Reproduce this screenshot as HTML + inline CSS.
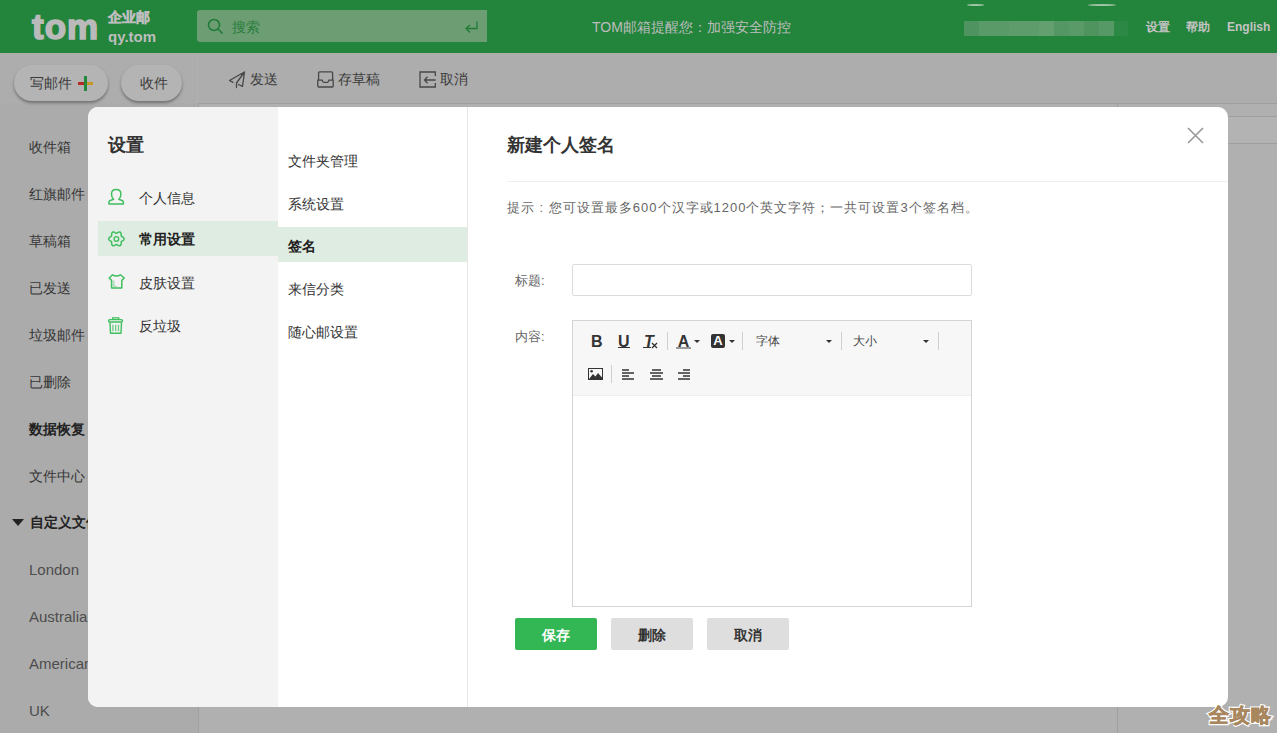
<!DOCTYPE html>
<html><head><meta charset="utf-8">
<style>
*{margin:0;padding:0;box-sizing:border-box}
html,body{width:1277px;height:733px;overflow:hidden;background:#b0b0b0;font-family:"Liberation Sans",sans-serif;position:relative}
.a{position:absolute;white-space:nowrap}
#hdr{left:0;top:0;width:1277px;height:53px;background:#23843c}
#side{left:0;top:103px;width:198px;height:630px;background:#ababab}
.vl{position:absolute;width:1px;background:#a0a0a0}
.hl{position:absolute;height:1px;background:#9f9f9f}
.si{font-size:14px;color:#353535;left:29px;line-height:20px}
.tb{font-size:14px;color:#3a3a3a;line-height:20px}
.pill{height:36px;border-radius:18px;background:#b4b4b4;box-shadow:0 2px 3px rgba(0,0,0,.35)}
#modal{left:88px;top:107px;width:1140px;height:600px;background:#fff;border-radius:10px;overflow:hidden}
#nav1{left:0;top:0;width:190px;height:600px;background:#f3f3f3}
#nav2{left:190px;top:0;width:190px;height:600px;background:#fff;border-right:1px solid #e6e6e6}
.n1{font-size:14px;color:#333;line-height:20px}
.ic{position:absolute}
</style></head><body>
<!-- header -->
<div class="a" id="hdr"></div>
<div class="a" style="left:32px;top:5px;font-size:35px;font-weight:bold;color:#bababa;line-height:44px;letter-spacing:1px;-webkit-text-stroke:1.6px #bababa">tom</div>
<div class="a" style="left:108px;top:8px;font-size:14px;font-weight:bold;color:#bdbdbd;line-height:18px;-webkit-text-stroke:0.5px #bdbdbd">企业邮</div>
<div class="a" style="left:108px;top:28px;font-size:15px;font-weight:bold;color:#bdbdbd;line-height:18px">qy.tom</div>
<div class="a" style="left:197px;top:10px;width:290px;height:32px;background:#6c9d73;border-radius:3px 0 0 3px"></div>
<svg class="a" style="left:207px;top:18px" width="17" height="17" viewBox="0 0 17 17"><circle cx="7" cy="7" r="5.5" fill="none" stroke="#1f7b37" stroke-width="1.5"/><line x1="11" y1="11" x2="15.5" y2="15.5" stroke="#1f7b37" stroke-width="1.6"/></svg>
<div class="a" style="left:232px;top:17px;font-size:14px;color:#2a7d3d;line-height:20px">搜索</div>
<svg class="a" style="left:464px;top:20px" width="15" height="14" viewBox="0 0 15 14"><path d="M13 1.5V8.5H2.5M6 5 2 8.5 6 12.5" fill="none" stroke="#1f7b37" stroke-width="1.3"/></svg>
<div class="a" style="left:592px;top:17px;font-size:14px;color:#bdbdbd;line-height:20px">TOM邮箱提醒您：加强安全防控</div>
<div class="a" style="left:964px;top:21px;width:15px;height:15px;background:#4f9460"></div><div class="a" style="left:979px;top:21px;width:15px;height:15px;background:#5a9a68"></div><div class="a" style="left:994px;top:21px;width:15px;height:15px;background:#5a9a68"></div><div class="a" style="left:1009px;top:21px;width:15px;height:15px;background:#5e9c6b"></div><div class="a" style="left:1024px;top:21px;width:15px;height:15px;background:#5e9c6b"></div><div class="a" style="left:1039px;top:21px;width:15px;height:15px;background:#649f70"></div><div class="a" style="left:1054px;top:21px;width:15px;height:15px;background:#549664"></div><div class="a" style="left:1069px;top:21px;width:15px;height:15px;background:#5a9a68"></div><div class="a" style="left:1084px;top:21px;width:15px;height:15px;background:#4f945f"></div><div class="a" style="left:1099px;top:21px;width:15px;height:15px;background:#569866"></div><div class="a" style="left:1114px;top:21px;width:14px;height:15px;background:#2b8845"></div><div class="a" style="left:967px;top:4px;width:17px;height:2px;border-radius:50%;background:#9fc4a6"></div><div class="a" style="left:1088px;top:4px;width:28px;height:2px;border-radius:50%;background:#9fc4a6"></div>
<div class="a" style="left:1146px;top:17px;font-size:12px;font-weight:bold;color:#c3c3c3;line-height:20px">设置</div>
<div class="a" style="left:1186px;top:17px;font-size:12px;font-weight:bold;color:#c3c3c3;line-height:20px">帮助</div>
<div class="a" style="left:1227px;top:17px;font-size:12px;font-weight:bold;color:#c3c3c3;line-height:20px">English</div>

<!-- background app -->
<div class="a" style="left:0;top:53px;width:1277px;height:50px;background:#adadad"></div>
<div class="a" id="side"></div>
<div class="a" style="left:197px;top:53px;width:1px;height:50px;background:#b0b0b0"></div>
<div class="vl" style="left:198px;top:103px;height:630px"></div>
<div class="hl" style="left:198px;top:103px;width:1079px"></div>
<div class="vl" style="left:1117px;top:103px;height:630px"></div>
<div class="hl" style="left:1117px;top:116px;width:160px"></div>
<div class="a" style="left:1118px;top:117px;width:159px;height:26px;background:#b3b3b3"></div>
<div class="hl" style="left:1117px;top:143px;width:160px"></div>

<div class="a pill" style="left:14px;top:65px;width:94px"></div>
<div class="a tb" style="left:30px;top:73px">写邮件</div>
<div class="a" style="left:78px;top:82px;width:6px;height:3px;background:#b52a22"></div>
<div class="a" style="left:87px;top:82px;width:6px;height:3px;background:#c79a26"></div>
<div class="a" style="left:84px;top:76px;width:3px;height:15px;background:#238a3c"></div>
<div class="a pill" style="left:121px;top:65px;width:61px"></div>
<div class="a tb" style="left:140px;top:73px">收件</div>

<svg class="a" style="left:224px;top:66px" width="28" height="26" viewBox="224 66 28 26"><path d="M244.5 72 229.5 80.5 233 82.3M244.5 72 236.5 83V87.5M244.5 72 242.5 86.3 238.5 84.5" fill="none" stroke="#474747" stroke-width="1.3" stroke-linejoin="round" stroke-linecap="round"/></svg>
<div class="a tb" style="left:250px;top:69px">发送</div>
<svg class="a" style="left:312px;top:66px" width="28" height="26" viewBox="312 66 28 26"><path d="M318.6 79.6V72.8Q318.6 71.8 319.6 71.8H331.6Q332.6 71.8 332.6 72.8V79.6M317.8 80.2H322.2Q322.6 82.3 324 82.3H327.2Q328.6 82.3 329 80.2H333.2V86Q333.2 87 332.2 87H318.8Q317.8 87 317.8 86Z" fill="none" stroke="#474747" stroke-width="1.3"/></svg>
<div class="a tb" style="left:338px;top:69px">存草稿</div>
<svg class="a" style="left:414px;top:66px" width="28" height="26" viewBox="414 66 28 26"><path d="M435.3 76V72H420V87H435.3V83M435.6 80H424.8M427.5 76.8 424.5 80 427.5 83.2" fill="none" stroke="#474747" stroke-width="1.3"/></svg>
<div class="a tb" style="left:440px;top:69px">取消</div>

<div class="a si" style="top:137px">收件箱</div>
<div class="a si" style="top:184px">红旗邮件</div>
<div class="a si" style="top:231px">草稿箱</div>
<div class="a si" style="top:278px">已发送</div>
<div class="a si" style="top:325px">垃圾邮件</div>
<div class="a si" style="top:372px">已删除</div>
<div class="a si" style="top:419px;font-weight:bold;color:#222">数据恢复</div>
<div class="a si" style="top:466px">文件中心</div>
<svg class="a" style="left:12px;top:519px" width="12" height="7" viewBox="0 0 12 7"><path d="M0 0H12L6 7Z" fill="#222"/></svg>
<div class="a si" style="top:512px;left:30px;font-weight:bold;color:#222">自定义文件夹</div>
<div class="a si" style="top:560px;font-size:15px;color:#4d4d4d">London</div>
<div class="a si" style="top:607px;font-size:15px;color:#4d4d4d">Australia</div>
<div class="a si" style="top:654px;font-size:15px;color:#4d4d4d">American</div>
<div class="a si" style="top:701px;font-size:15px;color:#4d4d4d">UK</div>

<!-- modal -->
<div class="a" id="modal">
  <div class="a" id="nav1"></div>
  <div class="a" id="nav2"></div>
  <div class="a" style="left:20px;top:26px;font-size:18px;font-weight:bold;color:#333;line-height:24px">设置</div>
  <div class="a" style="left:10px;top:114px;width:180px;height:35px;background:#dfece1"></div>
  <svg class="ic" style="left:14px;top:75px" width="30" height="30" viewBox="102 182 30 30"><path d="M113.6 199.3C112 198 111.5 196 111.5 194 111.5 191.2 113.3 189.5 116.2 189.5S120.9 191.2 120.9 194C120.9 196 120.4 198 118.8 199.3L122 200.5C123 201 123.4 201.6 123.4 202.5V204H108.9V202.5C108.9 201.6 109.3 201 110.3 200.5Z" fill="none" stroke="#40bf5f" stroke-width="1.5" stroke-linejoin="round"/></svg>
  <div class="a n1" style="left:51px;top:81px">个人信息</div>
  <svg class="ic" style="left:14px;top:117px" width="30" height="30" viewBox="102 224 30 30"><path d="M124.10 238.90 L124.04 239.30 L123.87 239.68 L123.60 240.04 L123.26 240.36 L122.87 240.63 L122.48 240.87 L122.11 241.09 L121.78 241.30 L121.52 241.51 L121.34 241.75 L121.22 242.03 L121.17 242.36 L121.15 242.75 L121.15 243.18 L121.14 243.64 L121.09 244.11 L120.99 244.56 L120.81 244.97 L120.57 245.32 L120.25 245.57 L119.87 245.72 L119.45 245.76 L119.01 245.70 L118.57 245.57 L118.13 245.37 L117.73 245.15 L117.36 244.94 L117.02 244.76 L116.70 244.64 L116.40 244.60 L116.10 244.64 L115.78 244.76 L115.44 244.94 L115.07 245.15 L114.67 245.37 L114.23 245.57 L113.79 245.70 L113.35 245.76 L112.93 245.72 L112.55 245.57 L112.23 245.32 L111.99 244.97 L111.81 244.56 L111.71 244.11 L111.66 243.64 L111.65 243.18 L111.65 242.75 L111.63 242.36 L111.58 242.03 L111.46 241.75 L111.28 241.51 L111.02 241.30 L110.69 241.09 L110.32 240.87 L109.93 240.63 L109.54 240.36 L109.20 240.04 L108.93 239.68 L108.76 239.30 L108.70 238.90 L108.76 238.50 L108.93 238.12 L109.20 237.76 L109.54 237.44 L109.93 237.17 L110.32 236.93 L110.69 236.71 L111.02 236.50 L111.28 236.29 L111.46 236.05 L111.58 235.77 L111.63 235.44 L111.65 235.05 L111.65 234.62 L111.66 234.16 L111.71 233.69 L111.81 233.24 L111.99 232.83 L112.23 232.48 L112.55 232.23 L112.93 232.08 L113.35 232.04 L113.79 232.10 L114.23 232.23 L114.67 232.43 L115.07 232.65 L115.44 232.86 L115.78 233.04 L116.10 233.16 L116.40 233.20 L116.70 233.16 L117.02 233.04 L117.36 232.86 L117.73 232.65 L118.13 232.43 L118.57 232.23 L119.01 232.10 L119.45 232.04 L119.87 232.08 L120.25 232.23 L120.57 232.48 L120.81 232.83 L120.99 233.24 L121.09 233.69 L121.14 234.16 L121.15 234.62 L121.15 235.05 L121.17 235.44 L121.22 235.77 L121.34 236.05 L121.52 236.29 L121.78 236.50 L122.11 236.71 L122.48 236.93 L122.87 237.17 L123.26 237.44 L123.60 237.76 L123.87 238.12 L124.04 238.50 L124.10 238.90Z" fill="none" stroke="#40bf5f" stroke-width="1.5"/><circle cx="116.4" cy="238.9" r="2.3" fill="none" stroke="#40bf5f" stroke-width="1.4"/></svg>
  <div class="a n1" style="left:51px;top:122px;font-weight:bold;color:#222">常用设置</div>
  <svg class="ic" style="left:14px;top:159px" width="30" height="30" viewBox="102 266 30 30"><path d="M112.5 274.8Q116.5 277.3 120.5 274.8L124.2 278 121.8 280.4V288H111.6V280.4L109.2 278Z" fill="none" stroke="#40bf5f" stroke-width="1.5" stroke-linejoin="round"/><path d="M113.8 280.5V286.3H116.5" fill="none" stroke="#40bf5f" stroke-width="1" opacity=".55"/></svg>
  <div class="a n1" style="left:51px;top:166px">皮肤设置</div>
  <svg class="ic" style="left:14px;top:203px" width="30" height="30" viewBox="102 310 30 30"><path d="M112.7 319.4V317.9H118.7V319.4" fill="none" stroke="#40bf5f" stroke-width="1.4"/><rect x="108.6" y="319.6" width="13.8" height="2.4" rx="1" fill="none" stroke="#40bf5f" stroke-width="1.4"/><path d="M110 322.5 110.5 333.3H121L121.5 322.5" fill="none" stroke="#40bf5f" stroke-width="1.4" stroke-linejoin="round"/><path d="M112.9 324.8V331.3M115.7 324.8V331.3M118.5 324.8V331.3" stroke="#40bf5f" stroke-width="1.3" opacity=".75"/></svg>
  <div class="a n1" style="left:51px;top:209px">反垃圾</div>

  <div class="a" style="left:190px;top:120px;width:189px;height:35px;background:#dfece1"></div>
  <div class="a n1" style="left:200px;top:44px">文件夹管理</div>
  <div class="a n1" style="left:200px;top:87px">系统设置</div>
  <div class="a n1" style="left:200px;top:129px;font-weight:bold;color:#222">签名</div>
  <div class="a n1" style="left:200px;top:172px">来信分类</div>
  <div class="a n1" style="left:200px;top:215px">随心邮设置</div>

  <div class="a" style="left:419px;top:26px;font-size:18px;font-weight:bold;color:#333;line-height:24px">新建个人签名</div>
  <svg class="ic" style="left:1099px;top:20px" width="17" height="17" viewBox="0 0 17 17"><path d="M1 1 16 16M16 1 1 16" stroke="#999" stroke-width="1.6"/></svg>
  <div class="a" style="left:419px;top:74px;width:721px;height:1px;background:#eeeeee"></div>
  <div class="a" style="left:419px;top:91px;font-size:13px;color:#666;line-height:20px;letter-spacing:1px">提示 : 您可设置最多600个汉字或1200个英文字符；一共可设置3个签名档。</div>

  <div class="a" style="left:427px;top:164px;font-size:13px;color:#666;line-height:20px">标题:</div>
  <div class="a" style="left:484px;top:157px;width:400px;height:32px;border:1px solid #dcdcdc;border-radius:2px"></div>
  <div class="a" style="left:427px;top:220px;font-size:13px;color:#666;line-height:20px">内容:</div>
  <div class="a" style="left:484px;top:213px;width:400px;height:287px;border:1px solid #d4d4d4"></div>
  <div class="a" style="left:485px;top:214px;width:398px;height:74px;background:#f7f7f7"></div>
  <div class="a" style="left:485px;top:288px;width:398px;height:1px;background:#efefef"></div>
</div>

<!-- editor toolbar -->
<div class="a" style="left:591px;top:330px;font-size:16px;font-weight:bold;color:#333;line-height:24px">B</div>
<div class="a" style="left:618px;top:330px;font-size:16px;font-weight:bold;color:#333;line-height:24px">U</div>
<div class="a" style="left:618px;top:347px;width:12px;height:1px;background:#333"></div>
<div class="a" style="left:644px;top:330px;font-size:16px;font-weight:bold;font-style:italic;color:#333;line-height:24px">T</div>
<div class="a" style="left:643px;top:347px;width:8px;height:1px;background:#333"></div>
<svg class="a" style="left:651px;top:342px" width="7" height="7" viewBox="0 0 7 7"><path d="M1 1 6 6M6 1 1 6" stroke="#333" stroke-width="1.3"/></svg>
<div class="a" style="left:667px;top:332px;width:1px;height:18px;background:#d0d0d0"></div>
<div class="a" style="left:676px;top:330px;font-size:16px;font-weight:bold;color:#333;line-height:24px;width:15px;text-align:center">A</div>
<div class="a" style="left:676px;top:347px;width:15px;height:2px;background:#999"></div>
<svg class="a" style="left:694px;top:340px" width="6" height="3" viewBox="0 0 6 3"><path d="M0 0H6L3 3Z" fill="#333"/></svg>
<div class="a" style="left:711px;top:334px;width:14px;height:14px;background:#333;border-radius:2px"></div>
<div class="a" style="left:711px;top:330px;font-size:13px;font-weight:bold;color:#fff;line-height:22px;width:14px;text-align:center">A</div>
<svg class="a" style="left:729px;top:340px" width="6" height="3" viewBox="0 0 6 3"><path d="M0 0H6L3 3Z" fill="#333"/></svg>
<div class="a" style="left:742px;top:332px;width:1px;height:18px;background:#d0d0d0"></div>
<div class="a" style="left:756px;top:332px;font-size:12px;color:#444;line-height:18px">字体</div>
<svg class="a" style="left:826px;top:340px" width="6" height="3" viewBox="0 0 6 3"><path d="M0 0H6L3 3Z" fill="#333"/></svg>
<div class="a" style="left:841px;top:332px;width:1px;height:18px;background:#d0d0d0"></div>
<div class="a" style="left:853px;top:332px;font-size:12px;color:#444;line-height:18px">大小</div>
<svg class="a" style="left:923px;top:340px" width="6" height="3" viewBox="0 0 6 3"><path d="M0 0H6L3 3Z" fill="#333"/></svg>
<div class="a" style="left:938px;top:332px;width:1px;height:18px;background:#d0d0d0"></div>
<svg class="a" style="left:588px;top:368px" width="15" height="12" viewBox="0 0 15 12"><rect x="0.5" y="0.5" width="14" height="11" fill="none" stroke="#333"/><circle cx="3.6" cy="3.3" r="1.3" fill="#333"/><path d="M1 11 5 6 7.5 8.5 10 5 14 9.5V11Z" fill="#333"/></svg>
<div class="a" style="left:611px;top:365px;width:1px;height:18px;background:#d0d0d0"></div>
<svg class="a" style="left:622px;top:369px" width="13" height="12" viewBox="0 0 13 12"><path d="M0 1H7M0 4H12M0 7H7M0 10H12" stroke="#333" stroke-width="1.6"/></svg>
<svg class="a" style="left:650px;top:369px" width="13" height="12" viewBox="0 0 13 12"><path d="M2 1H11M0 4H13M2 7H11M0 10H13" stroke="#333" stroke-width="1.6"/></svg>
<svg class="a" style="left:678px;top:369px" width="13" height="12" viewBox="0 0 13 12"><path d="M5 1H12M0 4H12M5 7H12M0 10H12" stroke="#333" stroke-width="1.6"/></svg>
<!-- buttons -->
<div class="a" style="left:515px;top:618px;width:82px;height:32px;background:#33b654;border-radius:2px;color:#fff;font-size:14px;font-weight:bold;text-align:center;line-height:32px;padding-top:1px">保存</div>
<div class="a" style="left:611px;top:618px;width:82px;height:32px;background:#dedede;border-radius:2px;color:#333;font-size:14px;font-weight:bold;text-align:center;line-height:32px;padding-top:1px">删除</div>
<div class="a" style="left:707px;top:618px;width:82px;height:32px;background:#dedede;border-radius:2px;color:#333;font-size:14px;font-weight:bold;text-align:center;line-height:32px;padding-top:1px">取消</div>

<!-- watermark -->
<div class="a" style="left:1209px;top:701px;font-size:20px;font-weight:bold;color:#fff;line-height:28px;letter-spacing:1px;-webkit-text-stroke:3px #fff">全攻略</div>
<div class="a" style="left:1209px;top:701px;font-size:20px;font-weight:bold;color:#a8875f;line-height:28px;letter-spacing:1px;-webkit-text-stroke:0.7px #a8875f">全攻略</div>
</body></html>
